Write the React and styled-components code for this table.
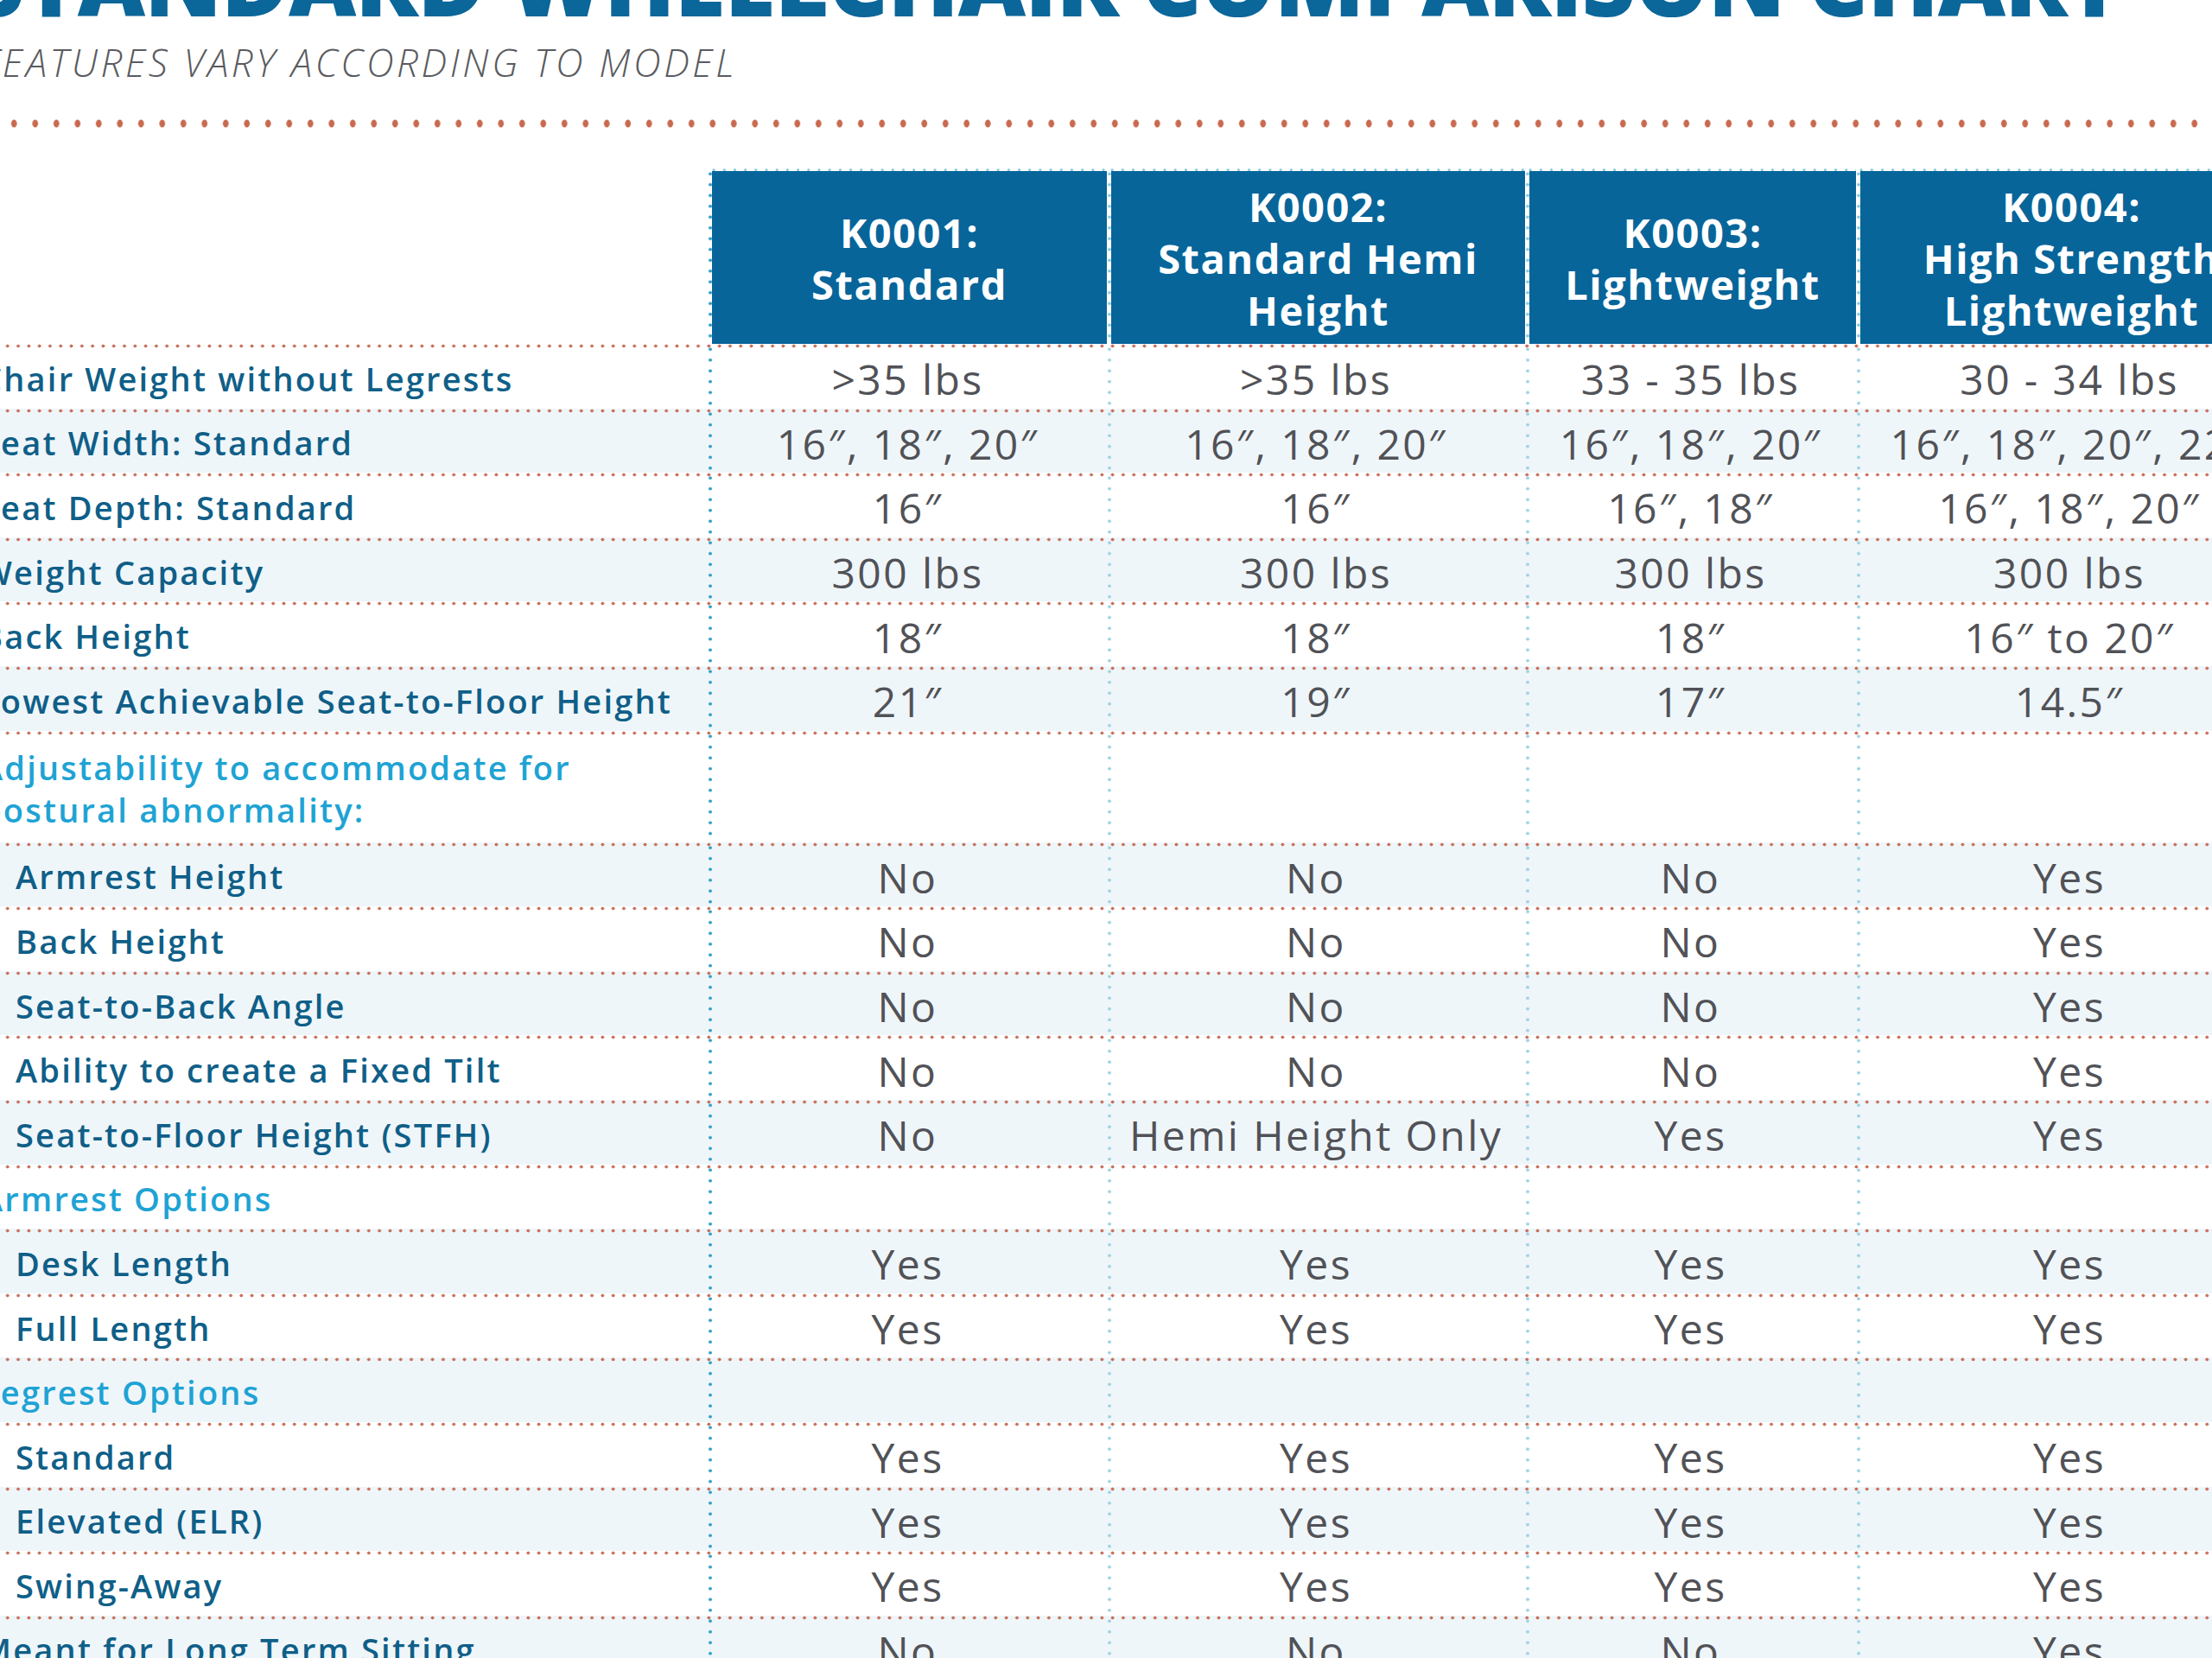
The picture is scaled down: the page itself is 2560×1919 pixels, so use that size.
import React from "react";
import styled, { createGlobalStyle } from "styled-components";

const GlobalStyle = createGlobalStyle`
  html, body {
    margin: 0;
    padding: 0;
    background: #ffffff;
    overflow: hidden;
  }
  body {
    font-family: "Open Sans", "Liberation Sans", sans-serif;
  }
`;

const COLS = "842px 461px 484px 383px 494px";

const models = [
  { code: "K0001:", name: ["Standard"] },
  { code: "K0002:", name: ["Standard Hemi", "Height"] },
  { code: "K0003:", name: ["Lightweight"] },
  { code: "K0004:", name: ["High Strength", "Lightweight"] },
];

const rows = [
  { label: "Chair Weight without Legrests", values: [">35 lbs", ">35 lbs", "33 - 35 lbs", "30 - 34 lbs"] },
  { label: "Seat Width: Standard", values: ["16″, 18″, 20″", "16″, 18″, 20″", "16″, 18″, 20″", "16″, 18″, 20″, 22″"] },
  { label: "Seat Depth: Standard", values: ["16″", "16″", "16″, 18″", "16″, 18″, 20″"] },
  { label: "Weight Capacity", values: ["300 lbs", "300 lbs", "300 lbs", "300 lbs"] },
  { label: "Back Height", values: ["18″", "18″", "18″", "16″ to 20″"] },
  { label: "Lowest Achievable Seat-to-Floor Height", values: ["21″", "19″", "17″", "14.5″"] },
  { label: "Adjustability to accommodate for\npostural abnormality:", section: true, tall: true },
  { label: "Armrest Height", sub: true, values: ["No", "No", "No", "Yes"] },
  { label: "Back Height", sub: true, values: ["No", "No", "No", "Yes"] },
  { label: "Seat-to-Back Angle", sub: true, values: ["No", "No", "No", "Yes"] },
  { label: "Ability to create a Fixed Tilt", sub: true, values: ["No", "No", "No", "Yes"] },
  { label: "Seat-to-Floor Height (STFH)", sub: true, values: ["No", "Hemi Height Only", "Yes", "Yes"] },
  { label: "Armrest Options", section: true },
  { label: "Desk Length", sub: true, values: ["Yes", "Yes", "Yes", "Yes"] },
  { label: "Full Length", sub: true, values: ["Yes", "Yes", "Yes", "Yes"] },
  { label: "Legrest Options", section: true },
  { label: "Standard", sub: true, values: ["Yes", "Yes", "Yes", "Yes"] },
  { label: "Elevated (ELR)", sub: true, values: ["Yes", "Yes", "Yes", "Yes"] },
  { label: "Swing-Away", sub: true, values: ["Yes", "Yes", "Yes", "Yes"] },
  { label: "Meant for Long Term Sitting", values: ["No", "No", "No", "Yes"] },
];

const App = () => {
  return (
    <>
      <GlobalStyle />
      <Page>
        <Title>Standard Wheelchair Comparison Chart</Title>
        <Subtitle>Features vary according to model</Subtitle>
        <DotRule />
        <HeaderRow>
          <div />
          {models.map((m, i) => (
            <HeadCell key={m.code} $first={i === 0}>
              <HeadBox>
                <span>{m.code}</span>
                {m.name.map((line) => (
                  <span key={line}>{line}</span>
                ))}
              </HeadBox>
            </HeadCell>
          ))}
        </HeaderRow>
        {rows.map((row, i) => (
          <Row key={row.label + i} $shaded={i % 2 === 1} $tall={row.tall}>
            <Label $sub={row.sub} $section={row.section}>
              {row.label}
            </Label>
            {[0, 1, 2, 3].map((c) => (
              <Cell key={c} $first={c === 0}>
                {row.values ? row.values[c] : ""}
              </Cell>
            ))}
          </Row>
        ))}
      </Page>
    </>
  );
};

const Page = styled.div`
  margin-left: -22px;
  width: 2700px;
`;

const Title = styled.h1`
  margin: -76px 0 0 -12px;
  font-size: 108px;
  line-height: 108px;
  font-weight: 800;
  letter-spacing: -1.2px;
  color: #0b6699;
  text-transform: uppercase;
  white-space: nowrap;
`;

const Subtitle = styled.p`
  margin: 16px 0 0 0;
  font-size: 44px;
  line-height: 48px;
  font-weight: 300;
  font-style: italic;
  letter-spacing: 3.6px;
  color: #5a5b60;
  text-transform: uppercase;
`;

const DotRule = styled.div`
  margin-top: 42px;
  height: 10px;
  margin-left: 26px;
  background-image: radial-gradient(
    ellipse 3.6px 5px at center,
    #c9694f 80%,
    transparent 100%
  );
  background-size: 24.5px 10px;
  background-repeat: repeat-x;
`;

const HeaderRow = styled.div`
  margin-top: 47px;
  display: grid;
  grid-template-columns: ${COLS};
  height: 203px;
`;

const HeadCell = styled.div`
  display: flex;
  padding: 3px 0 0 ${(p) => (p.$first ? "4px" : "5px")};
  background-color: #ffffff;
  background-image: radial-gradient(circle, #8ccbe0 1.5px, transparent 2px),
    radial-gradient(
      circle,
      ${(p) => (p.$first ? "#2f9fc6" : "#8ccbe0")} 1.6px,
      transparent 2.1px
    );
  background-size: 12.2px 4px, 4px 12.5px;
  background-position: 0 0, ${(p) => (p.$first ? "0" : "1px")} 0;
  background-repeat: repeat-x, repeat-y;
`;

const HeadBox = styled.div`
  flex: 1;
  display: flex;
  flex-direction: column;
  align-items: center;
  justify-content: center;
  padding-top: 2px;
  background: #07659a;
  color: #ffffff;
  font-size: 47px;
  line-height: 60px;
  font-weight: 700;
  letter-spacing: 1.5px;
  text-align: center;
  white-space: nowrap;
`;

const Row = styled.div`
  display: grid;
  grid-template-columns: ${COLS};
  height: ${(p) => (p.$tall ? "129px" : "74.6px")};
  background-color: ${(p) => (p.$shaded ? "#eff6fa" : "#ffffff")};
  background-image: radial-gradient(circle, #c8715b 1.7px, transparent 2.2px);
  background-size: 12.3px 5px;
  background-position: 0 0;
  background-repeat: repeat-x;
`;

const Label = styled.div`
  display: flex;
  align-items: center;
  padding: 6px 0 0 ${(p) => (p.$sub ? "40px" : "0")};
  font-size: 38px;
  line-height: 49px;
  font-weight: 600;
  letter-spacing: 2.2px;
  color: ${(p) => (p.$section ? "#1ea3d4" : "#0f5f88")};
  white-space: pre;
`;

const Cell = styled.div`
  display: flex;
  align-items: center;
  justify-content: center;
  padding-top: 7px;
  font-size: 48px;
  font-weight: 500;
  letter-spacing: 2.4px;
  color: #515257;
  white-space: nowrap;
  background-image: radial-gradient(
    circle,
    ${(p) => (p.$first ? "#2f9fc6" : "#9fd2e3")} 1.6px,
    transparent 2.1px
  );
  background-size: 4px 12.5px;
  background-position: ${(p) => (p.$first ? "0" : "1px")} 0;
  background-repeat: repeat-y;
`;

export default App;
